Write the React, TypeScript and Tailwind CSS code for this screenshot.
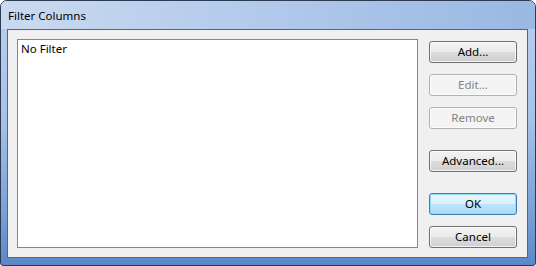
import React from "react";

const font = { fontFamily: '"Noto Sans", "Open Sans", sans-serif' };

function Btn({
  label,
  disabled,
  primary,
  className = "",
}: {
  label: string;
  disabled?: boolean;
  primary?: boolean;
  className?: string;
}) {
  let cls =
    "h-[22px] w-full rounded-[3px] border text-[11.5px] leading-none flex items-center justify-center ";
  if (disabled) {
    cls +=
      "border-[#adb2b5] bg-[#f4f4f4] text-[#838383] shadow-[inset_0_0_0_1px_#fcfcfc]";
  } else if (primary) {
    cls +=
      "border-[#3c7fb1] text-black bg-[linear-gradient(#eaf6fd_0%,#d9f0fc_50%,#bee6fd_50%,#a7d9f5_100%)] shadow-[inset_0_0_0_1px_#8fdcf9]";
  } else {
    cls +=
      "border-[#707070] text-black bg-[linear-gradient(#f2f2f2_0%,#ebebeb_50%,#dddddd_50%,#cfcfcf_100%)] shadow-[inset_0_0_0_1px_rgba(255,255,255,0.75)]";
  }
  return (
    <div className={cls + " " + className} style={font}>
      {label}
    </div>
  );
}

export default function App() {
  return (
    <div className="w-[536px] h-[266px] bg-white">
      <div className="w-[536px] h-[266px] border border-[#2c3b52] rounded-t-[7px] rounded-b-[3px] overflow-hidden flex flex-col bg-[linear-gradient(to_bottom,#b9cfee_0%,#a6c2e8_45%,#7aa0d6_80%,#5b87c9_100%)]">
        <div
          className="h-[28px] shrink-0 pl-[7px] flex items-center text-[11.5px] text-black bg-[linear-gradient(to_right,#cadaf0_0%,#b4cbeb_45%,#99b8e2_100%)]"
          style={font}
        >
          <span className="pt-[2px]">Filter Columns</span>
        </div>
        <div className="flex-1 pl-[6px] pr-[7px] pb-[7px] flex">
          <div className="flex-1 border border-[#4f6589] bg-[#f0f0f0] pt-[9px] pb-[9px] pl-[9px] pr-[10px] flex">
            <div className="w-[401px] h-[209px] border border-[#828790] bg-white pl-[3px] pt-[1px]">
              <div className="text-[11.5px] text-black leading-[15px]" style={font}>
                No Filter
              </div>
            </div>
            <div className="w-[88px] ml-[11px] flex flex-col">
              <Btn label="Add..." className="mt-[2px]" />
              <Btn label="Edit..." disabled className="mt-[11px]" />
              <Btn label="Remove" disabled className="mt-[11px]" />
              <Btn label="Advanced..." className="mt-[21px]" />
              <Btn label="OK" primary className="mt-[21px]" />
              <Btn label="Cancel" className="mt-[11px]" />
            </div>
          </div>
        </div>
      </div>
    </div>
  );
}
